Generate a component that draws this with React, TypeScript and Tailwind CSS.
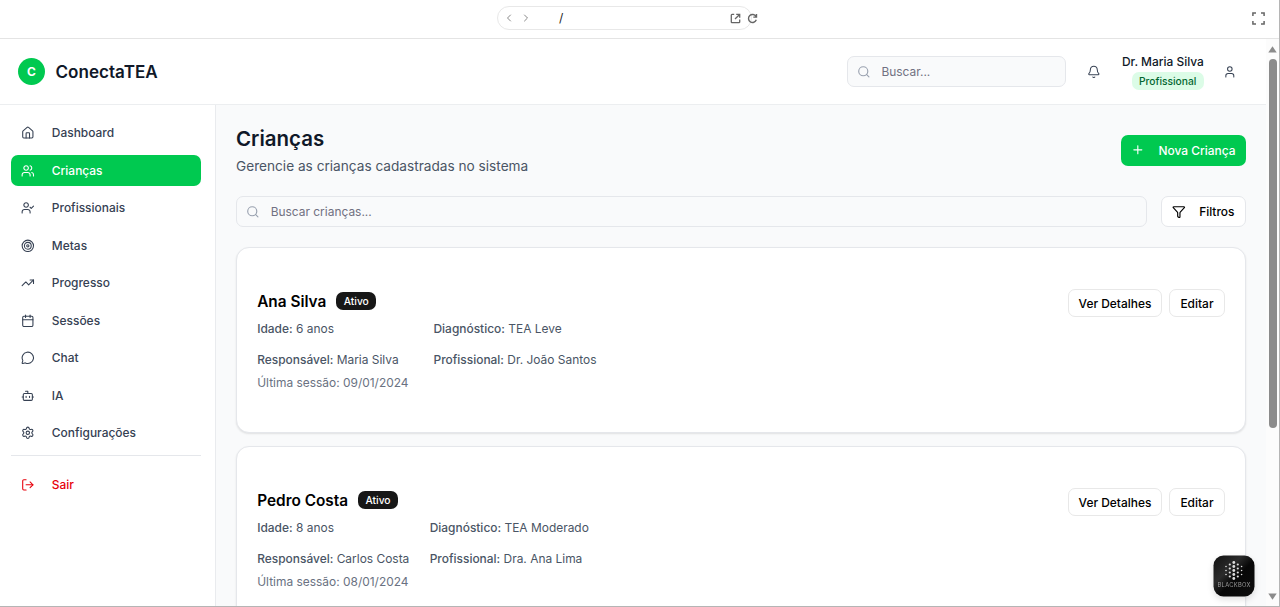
import {
  Bell, Bot, Calendar, ChevronLeft, ChevronRight, Funnel, House, LogOut, MessageCircle,
  Plus, Search, Settings, Target, TrendingUp, User, UserCheck, Users,
} from "lucide-react";
import type { LucideIcon } from "lucide-react";

type NavEntry = { label: string; icon: LucideIcon; active?: boolean };

const nav: NavEntry[] = [
  { label: "Dashboard", icon: House },
  { label: "Crianças", icon: Users, active: true },
  { label: "Profissionais", icon: UserCheck },
  { label: "Metas", icon: Target },
  { label: "Progresso", icon: TrendingUp },
  { label: "Sessões", icon: Calendar },
  { label: "Chat", icon: MessageCircle },
  { label: "IA", icon: Bot },
  { label: "Configurações", icon: Settings },
];

type Child = {
  name: string;
  age: string;
  guardian: string;
  diagnosis: string;
  professional: string;
  last: string;
  columns: string;
};

const children: Child[] = [
  {
    name: "Ana Silva",
    age: "6 anos",
    guardian: "Maria Silva",
    diagnosis: "TEA Leve",
    professional: "Dr. João Santos",
    last: "09/01/2024",
    columns: "grid-cols-[176.3px_auto]",
  },
  {
    name: "Pedro Costa",
    age: "8 anos",
    guardian: "Carlos Costa",
    diagnosis: "TEA Moderado",
    professional: "Dra. Ana Lima",
    last: "08/01/2024",
    columns: "grid-cols-[172.5px_auto]",
  },
];

function BrowserBar() {
  return (
    <div className="flex h-[39px] shrink-0 items-center border-b border-[#e4e4e4] pb-[2px] pl-[497px] pr-[14px]">
      <div className="flex h-6 w-[255px] items-center rounded-full border border-[#e8e8e8] pl-[5px] text-[#888]">
        <ChevronLeft className="size-[12px]" />
        <ChevronRight className="ml-[5px] size-[12px]" />
        <span className="ml-[27px] w-[100px] text-[12px] text-[#222]">/</span>
      </div>
      <div className="-ml-[22px] flex items-center gap-[7px] text-[#666]">
        <svg className="size-[11px]" viewBox="0 0 11 11" fill="none" stroke="currentColor" strokeWidth="1.3">
          <path d="M4.2 1.4H2A.7.7 0 0 0 1.3 2.1V9a.7.7 0 0 0 .7.7H9A.7.7 0 0 0 9.7 9V6.600M6.200 1.400H9.700V4.800M9.600 1.500 5 6" />
        </svg>
        <svg className="-ml-px size-[11px]" viewBox="0 0 11 11" fill="none" stroke="currentColor" strokeWidth="1.4">
          <path d="M9 3.500A4 4 0 1 0 9.300 6.800M9.500 1V4.100H6.300" />
        </svg>
      </div>
      <svg className="ml-auto mt-px size-[13px]" viewBox="0 0 13 13" fill="none" stroke="#666" strokeWidth="1.5">
        <path d="M.9 4V.9H4M9 .9H12.100V4M12.100 9V12.100H9M4 12.100H.9V9" />
      </svg>
    </div>
  );
}

function Header() {
  return (
    <header className="flex h-[66px] shrink-0 items-center border-b border-[#eceef0] bg-white pl-[18px] pr-[29px]">
      <div className="flex size-[27px] items-center justify-center rounded-full bg-[#00c950] text-[11.95px] font-bold text-white">
        C
      </div>
      <span className="-mt-px ml-[10.5px] text-[17.07px] font-semibold leading-[23px] text-[#101828]">ConectaTEA</span>
      <div className="ml-auto flex h-[31px] w-[219px] items-center rounded-[7px] border border-[#e5e7eb] bg-[#f9fafb] pl-[9.5px] text-[11.95px] text-[#717182]">
        <Search className="size-[13.65px] text-[#99a1af]" />
        <span className="ml-[10.5px]">Buscar...</span>
      </div>
      <Bell strokeWidth={1.8} className="ml-[21px] size-[13.65px] text-[#364153]" />
      <div className="ml-[21.5px] mr-px flex flex-col items-end">
        <span className="text-[11.95px] font-medium leading-[17px] text-[#101828]">Dr. Maria Silva</span>
        <span className="mt-[2px] flex h-[18px] items-center rounded-[7px] bg-[#dcfce7] px-[7.5px] pt-px text-[10.24px] font-medium text-[#016630]">
          Profissional
        </span>
      </div>
      <User strokeWidth={1.8} className="ml-[18.5px] size-[13.65px] text-[#364153]" />
    </header>
  );
}

function Sidebar() {
  return (
    <aside className="flex w-[216px] shrink-0 flex-col border-r border-[#e9ebee] bg-white pl-[11px] pr-[14px] pt-[12.6px] text-[11.95px] font-medium">
      <nav className="flex flex-col gap-[6.5px]">
        {nav.map(({ label, icon: Icon, active }) => (
          <div
            key={label}
            className={
              active
                ? "flex h-[31px] items-center rounded-[7px] bg-[#00c950] pl-[10px] text-white"
                : "flex h-[31px] items-center pl-[10px] text-[#364153]"
            }
          >
            <Icon strokeWidth={1.9} className="size-[13.65px]" />
            <span className="ml-[17.2px]">{label}</span>
          </div>
        ))}
      </nav>
      <div className="mt-[6.4px] flex border-t border-[#e5e7eb] pt-[13.3px]">
        <div className="flex h-[31px] items-center pl-[10px] text-[#e7000b]">
          <LogOut strokeWidth={1.9} className="size-[13.65px]" />
          <span className="ml-[17.2px]">Sair</span>
        </div>
      </div>
    </aside>
  );
}

function Field({ label, value }: { label: string; value: string }) {
  return (
    <div className="whitespace-nowrap">
      <span className="font-medium">{label}:</span> {value}
    </div>
  );
}

function ChildCard({ child }: { child: Child }) {
  return (
    <article className="flex h-[186px] shrink-0 justify-between rounded-[13px] border border-[#e5e7eb] bg-white pl-[20.2px] pr-[20.5px] pt-[41px] shadow-[0_1px_2px_rgba(0,0,0,0.1)]">
      <div className="text-[11.95px] text-[#4a5565]">
        <div className="flex h-[24px] items-center">
          <h3 className="pt-[2px] text-[15.36px] font-semibold leading-[22px] text-black">{child.name}</h3>
          <span className="ml-[10px] flex h-[18px] items-center rounded-[7px] bg-[#171717] px-[7.5px] pt-px text-[10.24px] font-medium text-white">
            Ativo
          </span>
        </div>
        <div className={"mt-[7px] grid gap-y-[13px] leading-[18px] " + child.columns}>
          <Field label="Idade" value={child.age} />
          <Field label="Diagnóstico" value={child.diagnosis} />
          <Field label="Responsável" value={child.guardian} />
          <Field label="Profissional" value={child.professional} />
        </div>
        <p className="mt-[5px] leading-[18px] text-[#6a7282]">Última sessão: {child.last}</p>
      </div>
      <div className="flex h-[28px] gap-[7px] text-[11.95px] font-medium text-black">
        <button className="rounded-[7px] border border-[#e8e8e8] px-[10px] pt-px">Ver Detalhes</button>
        <button className="rounded-[7px] border border-[#e8e8e8] px-[10px] pt-px">Editar</button>
      </div>
    </article>
  );
}

function Main() {
  return (
    <main className="flex min-w-0 flex-1 flex-col overflow-hidden bg-[#f9fafb] pl-5 pr-[20px] pt-[19px]">
      <div className="flex h-[52px] shrink-0 items-center justify-between">
        <div className="pt-[2px]">
          <h1 className="text-[20.48px] font-semibold leading-[28px] text-[#101828]">Crianças</h1>
          <p className="mt-[2px] text-[13.65px] leading-[22px] text-[#4a5565]">Gerencie as crianças cadastradas no sistema</p>
        </div>
        <button className="flex h-[31px] w-[125px] items-center rounded-[7px] bg-[#00c950] pl-[10px] text-[11.95px] font-medium text-white">
          <Plus className="size-[13.65px]" />
          <span className="ml-[13.8px] pt-px">Nova Criança</span>
        </button>
      </div>
      <div className="mt-[20px] flex h-[31px] shrink-0 gap-[14px] text-[11.95px]">
        <div className="flex flex-1 items-center rounded-[7px] border border-[#e5e7eb] bg-[#f9fafb] pl-[9px] text-[#717182]">
          <Search className="size-[13.65px] text-[#99a1af]" />
          <span className="ml-[11px]">Buscar crianças...</span>
        </div>
        <button className="flex w-[85px] items-center rounded-[7px] border border-[#e5e7eb] bg-white pl-[10px] font-medium text-black">
          <Funnel className="size-[13.65px]" />
          <span className="ml-[13.5px]">Filtros</span>
        </button>
      </div>
      <div className="mt-[20px] flex flex-col gap-[13px]">
        {children.map((child) => (
          <ChildCard key={child.name} child={child} />
        ))}
      </div>
    </main>
  );
}

function Scrollbar() {
  return (
    <div className="flex w-[13px] shrink-0 flex-col items-center bg-[#fcfcfc] pt-[7px]">
      <svg className="h-[7px] w-[9px]" viewBox="0 0 9 7" fill="#8b8b8b">
        <path d="M4.5 .3 8.7 6.4H.3Z" />
      </svg>
      <div className="mt-[6px] h-[369px] w-2 rounded-full bg-[#8b8b8b]" />
      <svg className="mb-[6px] mt-auto h-[7px] w-[9px]" viewBox="0 0 9 7" fill="#8b8b8b">
        <path d="M4.5 6.7 8.7 .6H.3Z" />
      </svg>
    </div>
  );
}

const dotColumns = [
  { x: 13, r: 0.8, ys: [11.5, 15.5, 19.5] },
  { x: 16.8, r: 1.1, ys: [9.5, 13.5, 17.5, 21.5] },
  { x: 20.8, r: 1.4, ys: [7.5, 11.5, 15.5, 19.5, 23.5] },
  { x: 24.8, r: 1.1, ys: [9.5, 13.5, 17.5, 21.5] },
  { x: 28.6, r: 0.8, ys: [11.5, 15.5, 19.5] },
];

function BlackboxBadge() {
  return (
    <svg className="absolute bottom-[9px] right-[24px] h-[42px] w-[42px] drop-shadow-md" viewBox="0 0 42 42">
      <defs>
        <linearGradient id="sheen" x1="0" y1="0" x2="1" y2="1">
          <stop offset="0" stopColor="#111" />
          <stop offset=".35" stopColor="#2b2b2b" />
          <stop offset=".55" stopColor="#070707" />
          <stop offset="1" stopColor="#0d0d0d" />
        </linearGradient>
      </defs>
      <rect x=".5" y=".5" width="41" height="41" rx="10" fill="url(#sheen)" />
      {dotColumns.flatMap(({ x, r, ys }) =>
        ys.map((y) => <circle key={x + "-" + y} cx={x} cy={y} r={r} fill="#dedede" />),
      )}
      <text x="21" y="32" textAnchor="middle" fontSize="5.8" textLength="33" className="font-['Inter']" fill="#999">
        BLACKBOX
      </text>
    </svg>
  );
}

export default function App() {
  return (
    <div className="relative flex h-[607px] w-[1280px] flex-col overflow-hidden border-b border-r border-[#b5b5b5] bg-white font-['Inter',sans-serif]">
      <BrowserBar />
      <div className="flex min-h-0 flex-1">
        <div className="flex min-w-0 flex-1 flex-col">
          <Header />
          <div className="flex min-h-0 flex-1">
            <Sidebar />
            <Main />
          </div>
        </div>
        <Scrollbar />
      </div>
      <BlackboxBadge />
      <div className="absolute right-[-1px] top-0 h-3 w-px bg-[#2f8f57]" />
    </div>
  );
}
